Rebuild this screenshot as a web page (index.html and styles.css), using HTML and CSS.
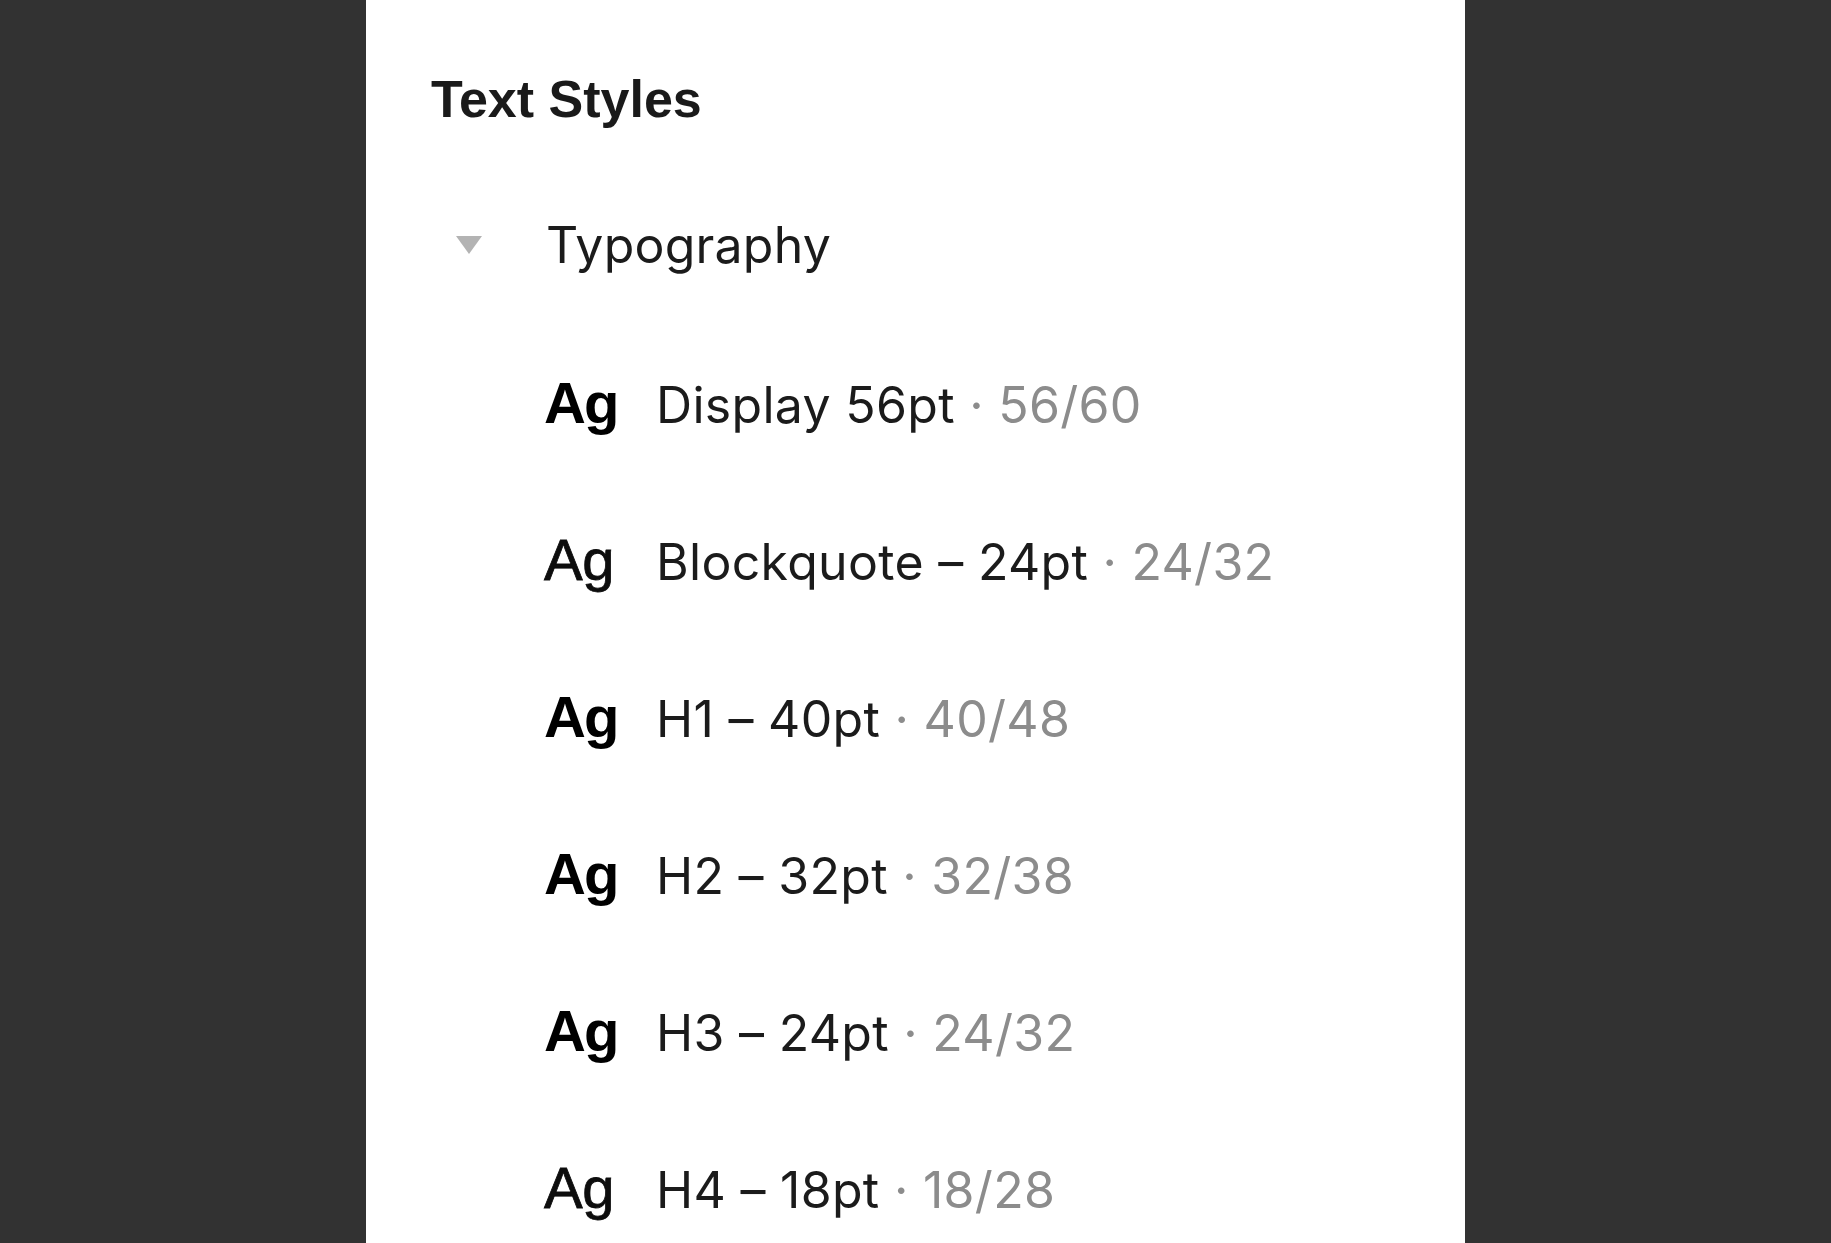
FILE: index.html
```html
<!DOCTYPE html>
<html>
<head>
<meta charset="utf-8">
<link rel="stylesheet" href="styles.css">
</head>
<body>
<div class="stage">
  <div class="panel">
    <div class="title">Text Styles</div>
    <div class="group">
      <span class="caret"></span>
      <span class="group-name">Typography</span>
    </div>
    <div class="row"><span class="ag bold">Ag</span><span class="name">Display 56pt<span class="meta"> · 56/60</span></span></div>
    <div class="row"><span class="ag">Ag</span><span class="name">Blockquote – 24pt<span class="meta"> · 24/32</span></span></div>
    <div class="row"><span class="ag bold">Ag</span><span class="name">H1 – 40pt<span class="meta"> · 40/48</span></span></div>
    <div class="row"><span class="ag bold">Ag</span><span class="name">H2 – 32pt<span class="meta"> · 32/38</span></span></div>
    <div class="row"><span class="ag bold">Ag</span><span class="name">H3 – 24pt<span class="meta"> · 24/32</span></span></div>
    <div class="row"><span class="ag">Ag</span><span class="name">H4 – 18pt<span class="meta"> · 18/28</span></span></div>
  </div>
</div>
</body>
</html>
```

FILE: styles.css
```css
html, body {
  margin: 0;
  padding: 0;
  height: 100%;
  background: #323232;
  overflow: hidden;
}
.stage {
  display: flex;
  height: 100%;
  padding-left: 366px;
}
.panel {
  width: 1099px;
  height: 100%;
  background: #ffffff;
  font-family: Inter, "Noto Sans", sans-serif;
  color: #1b1b1b;
  display: flex;
  flex-direction: column;
}
.title {
  height: 130px;
  padding-top: 34px;
  padding-left: 65px;
  display: flex;
  align-items: center;
  font-family: "Liberation Sans", Arial, sans-serif;
  font-size: 52px;
  font-weight: 700;
  color: #1a1a1a;
  flex: none;
}
.group {
  height: 162px;
  flex: none;
  display: flex;
  align-items: center;
}
.caret {
  margin-left: 90px;
  width: 0;
  height: 0;
  border-left: 13px solid transparent;
  border-right: 13px solid transparent;
  border-top: 18px solid #b3b3b3;
}
.group-name {
  margin-left: 64px;
  font-size: 50px;
  font-weight: 400;
  letter-spacing: 0.2px;
}
.row {
  height: 157px;
  flex: none;
  display: flex;
  align-items: center;
  padding-left: 178px;
}
.ag {
  width: 112px;
  font-family: "Liberation Sans", Arial, sans-serif;
  font-size: 58px;
  font-weight: 400;
  letter-spacing: -0.5px;
  color: #0d0d0d;
  -webkit-text-stroke: 0.8px #0d0d0d;
  position: relative;
  top: -2px;
}
.ag.bold {
  font-weight: 700;
  letter-spacing: -2px;
  color: #000;
  -webkit-text-stroke: 0;
}
.name {
  font-size: 50px;
  font-weight: 400;
  letter-spacing: 0.3px;
  white-space: nowrap;
}
.meta {
  color: #8c8c8c;
}
```
